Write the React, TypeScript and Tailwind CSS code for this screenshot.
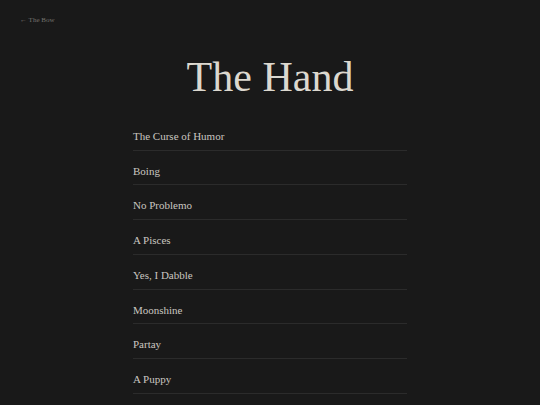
import React from "react";

const items = [
  "The Curse of Humor",
  "Boing",
  "No Problemo",
  "A Pisces",
  "Yes, I Dabble",
  "Moonshine",
  "Partay",
  "A Puppy",
];

export default function App() {
  return (
    <div
      className="min-h-screen bg-[#191919] text-[#d8d4cc]"
      style={{ fontFamily: '"Liberation Serif", "Times New Roman", serif' }}
    >
      <div className="px-5 pt-[15px]">
        <a className="text-[7px] leading-[10px] text-[#75726d] block">← The Bow</a>
      </div>
      <h1 className="mt-[28px] text-center text-[42px] leading-[48px] text-[#dcd8cf]">The Hand</h1>
      <ul className="mx-auto mt-[15px] w-[274px]">
        {items.map((t) => (
          <li
            key={t}
            className="border-b border-[#2b2b2b] pt-[12px] pb-[4.5px] text-[11px] leading-[17.2px] text-[#c9c6c0]"
          >
            {t}
          </li>
        ))}
      </ul>
    </div>
  );
}
